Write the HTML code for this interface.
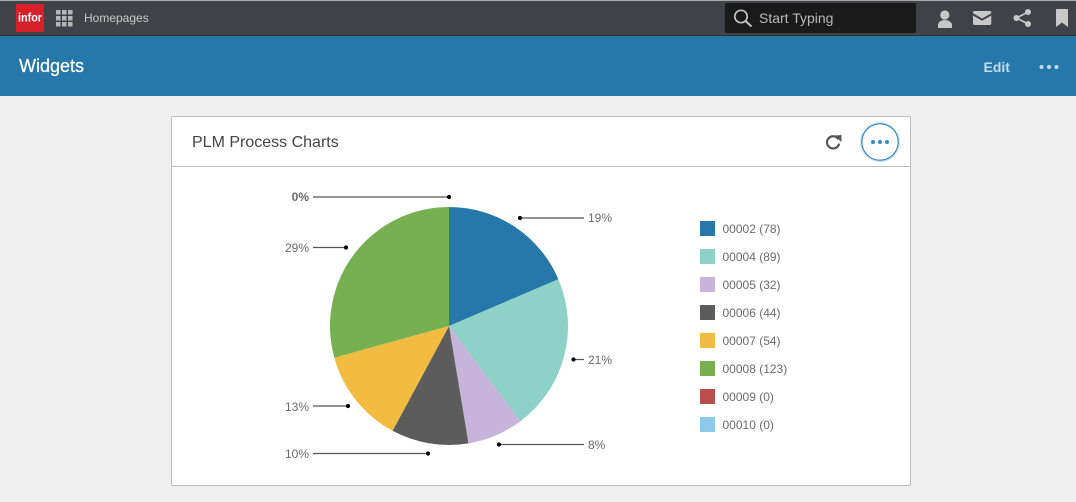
<!DOCTYPE html>
<html>
<head>
<meta charset="utf-8">
<style>
html,body{margin:0;padding:0;width:1076px;height:502px;overflow:hidden;background:#efefef;font-family:"Liberation Sans",Arial,sans-serif;}
svg{position:absolute;left:0;top:0;display:block}
</style>
</head>
<body>
<svg width="1076" height="502" viewBox="0 0 1076 502" xmlns="http://www.w3.org/2000/svg" font-family="'Liberation Sans',Arial,sans-serif">
  <!-- top bar -->
  <rect x="0" y="0" width="1076" height="36" fill="#414247"/>
  <rect x="0" y="0" width="1076" height="1" fill="#a9a9ab"/>
  <rect x="0" y="35" width="1076" height="1" fill="#2f3034"/>
  <!-- blue header -->
  <rect x="0" y="36" width="1076" height="60" fill="#2578a9"/>

  <!-- logo -->
  <rect x="16" y="4" width="28" height="28" fill="#d6202a"/>
  <text x="30" y="21.500" font-size="11.500" font-weight="700" fill="#fff" text-anchor="middle" textLength="24" lengthAdjust="spacingAndGlyphs">infor</text>

  <!-- apps grid -->
  <g fill="#b5b5b7">
    <rect x="56" y="10" width="4.500" height="4.500"/><rect x="62" y="10" width="4.500" height="4.500"/><rect x="68" y="10" width="4.500" height="4.500"/>
    <rect x="56" y="16" width="4.500" height="4.500"/><rect x="62" y="16" width="4.500" height="4.500"/><rect x="68" y="16" width="4.500" height="4.500"/>
    <rect x="56" y="22" width="4.500" height="4.500"/><rect x="62" y="22" width="4.500" height="4.500"/><rect x="68" y="22" width="4.500" height="4.500"/>
  </g>
  <text x="84" y="22" font-size="12" fill="#c9c9cb">Homepages</text>

  <!-- search -->
  <rect x="725" y="3" width="191" height="30" rx="2" fill="#1a1a1a"/>
  <circle cx="741" cy="16.500" r="6.200" fill="none" stroke="#c4c4c4" stroke-width="1.700"/>
  <path d="M745.500 21l6 5.500" stroke="#c4c4c4" stroke-width="2" fill="none"/>
  <text x="759" y="23" font-size="14" fill="#b9b9b9">Start Typing</text>

  <!-- user icon -->
  <g fill="#c8c8c8">
    <circle cx="944.800" cy="15" r="4.600"/>
    <path d="M938 28v-3c0-3 3.500-5 6.800-5s7.200 2 7.200 5v3z"/>
  </g>
  <!-- mail icon -->
  <path d="M973 12.500c0-1 .8-1.500 1.500-1.500h15.300c.7 0 1.500.5 1.500 1.500v.8l-9.150 5.200-9.150-5.200z" fill="#c8c8c8"/>
  <path d="M973 15.500l9.150 5.200 9.150-5.200V23.500c0 1-.8 1.500-1.500 1.500h-15.300c-.7 0-1.500-.5-1.500-1.500z" fill="#c8c8c8"/>
  <!-- share icon -->
  <g fill="#c8c8c8" stroke="none">
    <circle cx="1028" cy="12" r="3"/><circle cx="1016.500" cy="18" r="3"/><circle cx="1028" cy="24" r="3"/>
  </g>
  <path d="M1028 12l-11.500 6 11.500 6" fill="none" stroke="#c8c8c8" stroke-width="1.600"/>
  <!-- bookmark icon -->
  <path d="M1056 10c0-.6.4-1 1-1h10c.6 0 1 .4 1 1v17l-6-4.500-6 4.500z" fill="#c8c8c8"/>

  <!-- header text -->
  <text x="19" y="72" font-size="18" font-weight="400" fill="#ffffff" stroke="#ffffff" stroke-width="0.250">Widgets</text>
  <text x="983.500" y="72" font-size="14" font-weight="700" fill="#c3dcec">Edit</text>
  <g fill="#c3dcec"><circle cx="1041.500" cy="67" r="2"/><circle cx="1049" cy="67" r="2"/><circle cx="1056.500" cy="67" r="2"/></g>

  <!-- card -->
  <rect x="171.500" y="116.500" width="739" height="369" rx="1.500" fill="#ffffff" stroke="#bdbdbd"/>
  <rect x="172" y="166" width="738" height="1" fill="#bdbdbd"/>
  <text x="192" y="147" font-size="16" fill="#444446">PLM Process Charts</text>

  <!-- refresh -->
  <path d="M838.400 139.300a6.100 6.100 0 1 0 .7 4.300" fill="none" stroke="#555" stroke-width="2.200"/>
  <path d="M834 135.500l7.500-.5v7z" fill="#555"/>

  <!-- more button -->
  <circle cx="880" cy="142" r="18.500" fill="#fff" stroke="#cfe4f2" stroke-width="3"/>
  <circle cx="880" cy="142" r="18.200" fill="#fff" stroke="#368ac0" stroke-width="1.200"/>
  <g fill="#368ac0"><circle cx="873" cy="142" r="2"/><circle cx="880" cy="142" r="2"/><circle cx="887" cy="142" r="2"/></g>

  <!-- pie -->
  <path d="M449 326V207A119 119 0 0 1 558.400 279.200Z" fill="#2578a9"/>
  <path d="M449 326L558.400 279.200A119 119 0 0 1 520.400 421.200Z" fill="#8ed1c6"/>
  <path d="M449 326L520.400 421.200A119 119 0 0 1 468.500 443.400Z" fill="#c7b4db"/>
  <path d="M449 326L468.500 443.400A119 119 0 0 1 392.600 430.800Z" fill="#5c5c5c"/>
  <path d="M449 326L392.600 430.800A119 119 0 0 1 334.300 357.700Z" fill="#f2bc41"/>
  <path d="M449 326L334.300 357.700A119 119 0 0 1 449 207Z" fill="#76b051"/>

  <!-- leader lines -->
  <g stroke="#555" stroke-width="1.200" fill="none">
    <path d="M313 197H449"/>
    <path d="M313 247.500H346"/>
    <path d="M313 406H348"/>
    <path d="M313 453.500H428"/>
    <path d="M520 218H584"/>
    <path d="M573 359.500H584"/>
    <path d="M499 444.500H584"/>
  </g>
  <g fill="#000">
    <circle cx="449" cy="197" r="2.100"/>
    <circle cx="346" cy="247.500" r="2.100"/>
    <circle cx="348" cy="406" r="2.100"/>
    <circle cx="428" cy="453.500" r="2.100"/>
    <circle cx="520" cy="218" r="2.100"/>
    <circle cx="573.500" cy="359.500" r="2.100"/>
    <circle cx="499" cy="444.500" r="2.100"/>
  </g>
  <g font-size="12" fill="#6b6b6b">
    <text x="309" y="201" text-anchor="end" font-weight="700">0%</text>
    <text x="309" y="252" text-anchor="end">29%</text>
    <text x="309" y="411" text-anchor="end">13%</text>
    <text x="309" y="458" text-anchor="end">10%</text>
    <text x="588" y="222">19%</text>
    <text x="588" y="364">21%</text>
    <text x="588" y="449">8%</text>
  </g>

  <!-- legend -->
  <rect x="700" y="221" width="15" height="15" fill="#2578a9"/>
  <rect x="700" y="249" width="15" height="15" fill="#8ed1c6"/>
  <rect x="700" y="277" width="15" height="15" fill="#c7b4db"/>
  <rect x="700" y="305" width="15" height="15" fill="#5c5c5c"/>
  <rect x="700" y="333" width="15" height="15" fill="#f2bc41"/>
  <rect x="700" y="361" width="15" height="15" fill="#76b051"/>
  <rect x="700" y="389" width="15" height="15" fill="#ba4e4f"/>
  <rect x="700" y="417" width="15" height="15" fill="#8dc9e8"/>
  <g font-size="12" fill="#6b6b6b">
    <text x="722.500" y="233">00002 (78)</text>
    <text x="722.500" y="261">00004 (89)</text>
    <text x="722.500" y="289">00005 (32)</text>
    <text x="722.500" y="317">00006 (44)</text>
    <text x="722.500" y="345">00007 (54)</text>
    <text x="722.500" y="373">00008 (123)</text>
    <text x="722.500" y="401">00009 (0)</text>
    <text x="722.500" y="429">00010 (0)</text>
  </g>
</svg>
</body>
</html>
